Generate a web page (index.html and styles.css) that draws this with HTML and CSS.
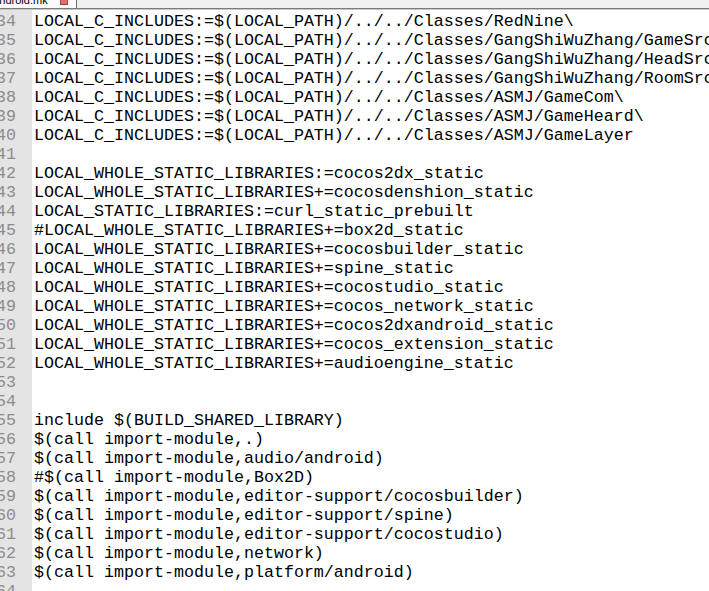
FILE: index.html
```html
<!DOCTYPE html>
<html>
<head>
<meta charset="utf-8">
<link rel="stylesheet" href="styles.css">
</head>
<body>
<div class="app">
  <div class="tabbar">
    <div class="tab">
      <span class="tab-name">Android.mk</span>
      <span class="tab-close"></span>
    </div>
  </div>
  <div class="sep"></div>
  <div class="editor">
    <div class="gutter">
      <div class="ln">34</div><div class="ln">35</div><div class="ln">36</div><div class="ln">37</div><div class="ln">38</div><div class="ln">39</div><div class="ln">40</div><div class="ln">41</div><div class="ln">42</div><div class="ln">43</div><div class="ln">44</div><div class="ln">45</div><div class="ln">46</div><div class="ln">47</div><div class="ln">48</div><div class="ln">49</div><div class="ln">50</div><div class="ln">51</div><div class="ln">52</div><div class="ln">53</div><div class="ln">54</div><div class="ln">55</div><div class="ln">56</div><div class="ln">57</div><div class="ln">58</div><div class="ln">59</div><div class="ln">60</div><div class="ln">61</div><div class="ln">62</div><div class="ln">63</div><div class="ln">64</div>
    </div>
    <div class="code">
<div class="line">LOCAL_C_INCLUDES:=$(LOCAL_PATH)/../../Classes/RedNine\</div>
<div class="line">LOCAL_C_INCLUDES:=$(LOCAL_PATH)/../../Classes/GangShiWuZhang/GameSrc\</div>
<div class="line">LOCAL_C_INCLUDES:=$(LOCAL_PATH)/../../Classes/GangShiWuZhang/HeadSrc\</div>
<div class="line">LOCAL_C_INCLUDES:=$(LOCAL_PATH)/../../Classes/GangShiWuZhang/RoomSrc\</div>
<div class="line">LOCAL_C_INCLUDES:=$(LOCAL_PATH)/../../Classes/ASMJ/GameCom\</div>
<div class="line">LOCAL_C_INCLUDES:=$(LOCAL_PATH)/../../Classes/ASMJ/GameHeard\</div>
<div class="line">LOCAL_C_INCLUDES:=$(LOCAL_PATH)/../../Classes/ASMJ/GameLayer</div>
<div class="line"></div>
<div class="line">LOCAL_WHOLE_STATIC_LIBRARIES:=cocos2dx_static</div>
<div class="line">LOCAL_WHOLE_STATIC_LIBRARIES+=cocosdenshion_static</div>
<div class="line">LOCAL_STATIC_LIBRARIES:=curl_static_prebuilt</div>
<div class="line">#LOCAL_WHOLE_STATIC_LIBRARIES+=box2d_static</div>
<div class="line">LOCAL_WHOLE_STATIC_LIBRARIES+=cocosbuilder_static</div>
<div class="line">LOCAL_WHOLE_STATIC_LIBRARIES+=spine_static</div>
<div class="line">LOCAL_WHOLE_STATIC_LIBRARIES+=cocostudio_static</div>
<div class="line">LOCAL_WHOLE_STATIC_LIBRARIES+=cocos_network_static</div>
<div class="line">LOCAL_WHOLE_STATIC_LIBRARIES+=cocos2dxandroid_static</div>
<div class="line">LOCAL_WHOLE_STATIC_LIBRARIES+=cocos_extension_static</div>
<div class="line">LOCAL_WHOLE_STATIC_LIBRARIES+=audioengine_static</div>
<div class="line"></div>
<div class="line"></div>
<div class="line">include $(BUILD_SHARED_LIBRARY)</div>
<div class="line">$(call import-module,.)</div>
<div class="line">$(call import-module,audio/android)</div>
<div class="line">#$(call import-module,Box2D)</div>
<div class="line">$(call import-module,editor-support/cocosbuilder)</div>
<div class="line">$(call import-module,editor-support/spine)</div>
<div class="line">$(call import-module,editor-support/cocostudio)</div>
<div class="line">$(call import-module,network)</div>
<div class="line">$(call import-module,platform/android)</div>
<div class="line"></div>
    </div>
  </div>
</div>
</body>
</html>
```

FILE: styles.css
```css
html, body {
  margin: 0;
  padding: 0;
  background: #ffffff;
}

.app {
  width: 709px;
  height: 591px;
  overflow: hidden;
  display: flex;
  flex-direction: column;
}

.tabbar {
  height: 8px;
  flex: none;
  background: #f0f0f0;
  overflow: hidden;
  display: flex;
  align-items: flex-start;
}

.tab {
  width: 76px;
  height: 8px;
  background: #fbfbfb;
  border-right: 1px solid #6e6e6e;
  display: flex;
  align-items: flex-start;
  overflow: hidden;
  position: relative;
}

.tab-name {
  font-family: "Liberation Sans", sans-serif;
  font-size: 11px;
  line-height: 13px;
  color: #000;
  margin-left: -8px;
  margin-top: -6px;
  white-space: nowrap;
}

.tab-close {
  position: absolute;
  left: 60px;
  top: -4px;
  width: 8px;
  height: 9px;
  background: #e07070;
  border: 1px solid #b04040;
  box-sizing: border-box;
}

.sep {
  height: 2px;
  flex: none;
  border-top: 1px solid #7a7a7a;
  background: #c8c8c8;
  box-sizing: border-box;
}

.editor {
  flex: 1;
  display: flex;
  overflow: hidden;
}

.gutter {
  width: 32px;
  flex: none;
  background: #e4e4e4;
  padding-top: 2px;
  padding-right: 16px;
  box-sizing: border-box;
  overflow: hidden;
  font-family: "Liberation Mono", monospace;
  font-size: 16.67px;
  line-height: 19px;
  color: #8c8c8c;
}

.ln {
  height: 19px;
  text-align: right;
  white-space: nowrap;
  direction: rtl;
}

.code {
  flex: 1;
  padding-top: 2px;
  padding-left: 2px;
  overflow: hidden;
  font-family: "Liberation Mono", monospace;
  font-size: 16.67px;
  line-height: 19px;
  color: #000;
}

.line {
  height: 19px;
  white-space: pre;
}
```
